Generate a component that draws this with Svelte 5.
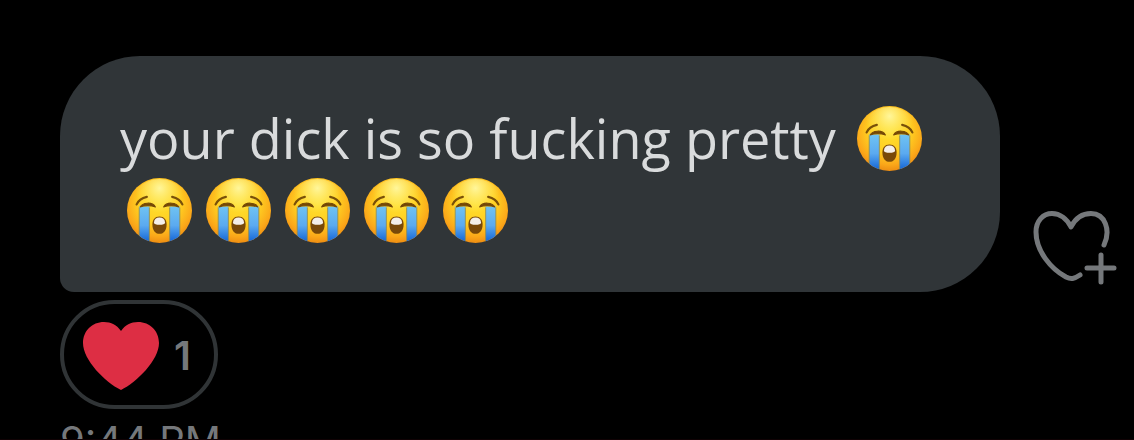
<script lang="ts">
  const message = "your dick is so fucking pretty";
  const lineEmojis = 6;
  const time = "9:44 PM";
  let reactions = 1;
</script>

{#snippet sob()}
  <svg class="emoji" viewBox="0 0 64 64" role="img" aria-label="Loudly crying face">
    <defs>
      <radialGradient id="face" cx="32" cy="25" r="41" gradientUnits="userSpaceOnUse">
        <stop offset="0" stop-color="#ffdf2e" />
        <stop offset="0.5" stop-color="#ffcf22" />
        <stop offset="0.8" stop-color="#fba719" />
        <stop offset="1" stop-color="#e98510" />
      </radialGradient>
      <radialGradient id="shine" cx="32" cy="10" r="24" gradientUnits="userSpaceOnUse">
        <stop offset="0" stop-color="#fffaa8" stop-opacity="0.9" />
        <stop offset="1" stop-color="#fff27a" stop-opacity="0" />
      </radialGradient>
      <linearGradient id="tears" x1="0" y1="28" x2="0" y2="62" gradientUnits="userSpaceOnUse">
        <stop offset="0" stop-color="#6fc3f2" />
        <stop offset="0.55" stop-color="#5baaf0" />
        <stop offset="1" stop-color="#1769d8" />
      </linearGradient>
      <clipPath id="round"><circle cx="32" cy="32" r="32" /></clipPath>
    </defs>
    <circle cx="32" cy="32" r="32" fill="url(#face)" />
    <circle cx="32" cy="32" r="31" fill="url(#shine)" />
    <g clip-path="url(#round)">
      <path d="M12 28h10v36H12zM42 28h10v36H42z" fill="url(#tears)" />
      <path d="M12 29v35M22 29v35M42 29v35M52 29v35" stroke="#8b8a55" stroke-width="0.8" />
    </g>
    <path
      d="M9.500 26Q12 20 19.500 18.500M54.500 26Q52 20 44.500 18.500"
      fill="none"
      stroke="#795009"
      stroke-width="2.200"
      stroke-linecap="round"
    />
    <path
      d="M13 28.500C15 24 25 23 28 28.500C24 27 17 27 13 28.500ZM36 28.500C39 23 49 24 51 28.500C47 27 40 27 36 28.500Z"
      fill="#744806"
      stroke="#744806"
      stroke-linejoin="round"
    />
    <path d="M32 38C36.500 38 39 41 39 46S36.500 55 32 55S25 51 25 46S27.500 38 32 38Z" fill="#794909" />
    <path d="M26.500 44Q27 39 32 39T37.500 44Q37 46 32 46T26.500 44Z" fill="#f4efe9" />
  </svg>
{/snippet}

<main class="chat">
  <div class="row">
    <p class="bubble">
      {message}
      {#each { length: lineEmojis } as _}{@render sob()}{/each}
    </p>
    <button class="react" type="button" aria-label="Add reaction">
      <svg viewBox="0 0 84 76" aria-hidden="true">
        <path
          d="M71 35C78 20 72 3.500 58 3.500C49 3.500 42 9 38 17C34 9 27 3.500 19 3.500C10 3.500 3 11 3 22C3 41 18 59 33 67C38 69.500 41 69 47 65"
        />
        <path d="M68 45V72M54 58H81" />
      </svg>
    </button>
  </div>

  <button class="reaction" type="button" aria-label={`Heart, ${reactions}`}>
    <svg viewBox="0 0 76 68" aria-hidden="true">
      <path d="M38 9C42 3 48 0 55 0C67 0 76 9 76 21C76 38 54 60 38 68C22 60 0 38 0 21C0 9 9 0 21 0C28 0 34 3 38 9Z" />
    </svg>
    <span>{reactions}</span>
  </button>

  <time class="time">{time}</time>
</main>

<style>
  :global(body) {
    margin: 0;
    background: #000;
  }

  .chat {
    box-sizing: border-box;
    display: flex;
    flex-direction: column;
    align-items: flex-start;
    height: 100vh;
    padding: 56px 17px 0 60px;
    overflow: hidden;
    border-bottom: 1px solid #100204;
    background: #000;
    color: #75787b;
    font-family: Inter, sans-serif;
  }

  .row {
    display: flex;
    align-items: flex-end;
    gap: 33px;
    width: 100%;
  }

  .bubble {
    flex: 1;
    margin: 0;
    padding: 46px 60px;
    border-radius: 80px 80px 80px 14px;
    background: #303538;
    color: #d9dbdc;
    font-family: "Open Sans", sans-serif;
    font-size: 54px;
    line-height: 72px;
  }

  .emoji {
    width: 65px;
    height: 65px;
    margin: 0 7px;
    vertical-align: -12px;
  }

  button {
    padding: 0;
    background: none;
    color: inherit;
    font: inherit;
    cursor: pointer;
  }

  .react {
    width: 84px;
    margin-bottom: 6px;
    border: 0;
  }

  .react svg {
    display: block;
    width: 100%;
    fill: none;
    stroke: #75787b;
    stroke-width: 5;
    stroke-linecap: round;
    stroke-linejoin: round;
  }

  .reaction {
    display: flex;
    flex: none;
    align-items: center;
    gap: 15px;
    height: 109px;
    margin-top: 8px;
    padding: 2px 23px 0 19px;
    border: 4px solid #303436;
    border-radius: 55px;
    font-size: 40px;
    font-weight: 600;
  }

  .reaction svg {
    width: 76px;
    height: 68px;
    fill: #dd2e44;
  }

  .time {
    margin-top: 8px;
    font-size: 40px;
    line-height: 48px;
  }
</style>
